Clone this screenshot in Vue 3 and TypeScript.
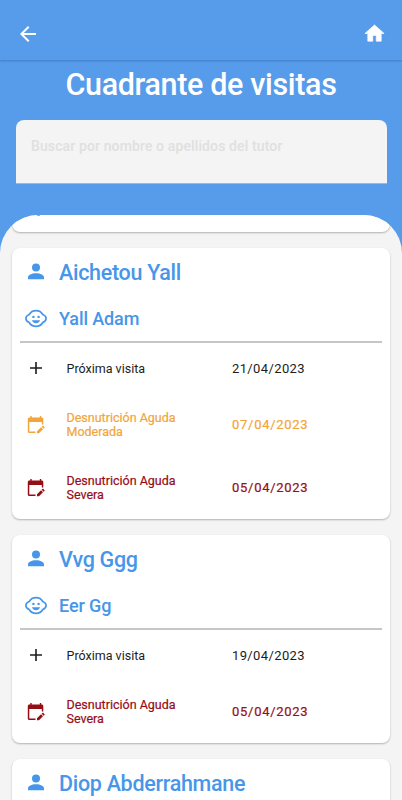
<script setup lang="ts">
type Tone = 'plain' | 'moderate' | 'severe'
interface Visit { label: string; date: string; tone: Tone }
interface Family { tutor: string; child: string; visits: Visit[] }

const families: Family[] = [
  {
    tutor: 'Aichetou Yall',
    child: 'Yall Adam',
    visits: [
      { label: 'Próxima visita', date: '21/04/2023', tone: 'plain' },
      { label: 'Desnutrición Aguda Moderada', date: '07/04/2023', tone: 'moderate' },
      { label: 'Desnutrición Aguda Severa', date: '05/04/2023', tone: 'severe' },
    ],
  },
  {
    tutor: 'Vvg Ggg',
    child: 'Eer Gg',
    visits: [
      { label: 'Próxima visita', date: '19/04/2023', tone: 'plain' },
      { label: 'Desnutrición Aguda Severa', date: '05/04/2023', tone: 'severe' },
    ],
  },
  { tutor: 'Diop Abderrahmane', child: '', visits: [] },
]
</script>

<template>
  <div class="screen">
    <header class="bar">
      <svg class="back" viewBox="0 0 24 24"><path d="M20 11H7.83l5.59-5.59L12 4l-8 8 8 8 1.41-1.41L7.83 13H20z" /></svg>
      <svg class="home" viewBox="0 0 24 24"><path d="M10.200 20v-6h3.600v6H19v-8h3L12 3 2 12h3v8z" stroke="currentColor" stroke-width=".7" stroke-linejoin="round" /></svg>
    </header>
    <h1 class="title"><span>Cuadrante de visitas</span></h1>
    <div class="search"><span>Buscar por nombre o apellidos del tutor</span></div>
    <main class="sheet">
      <section class="card previous"><i class="trace"></i></section>
      <section v-for="family in families" :key="family.tutor" class="card">
        <div class="person tutor">
          <svg class="icon" viewBox="0 0 24 24"><circle cx="12" cy="7.500" r="4" /><path d="M12 13.200c4.420 0 8 1.790 8 4v2H4v-2c0-2.210 3.580-4 8-4z" /></svg>
          <span>{{ family.tutor }}</span>
        </div>
        <div v-if="family.child" class="person child">
          <svg class="icon" viewBox="0 0 24 24">
            <path class="line" d="M12 3.600c3.200 0 5.400 1.500 6.800 3.900 2 .8 3.300 2.200 3.300 4s-1.300 3.200-3.300 4c-1.400 2.400-3.600 3.900-6.800 3.900s-5.400-1.500-6.800-3.900c-2-.8-3.300-2.200-3.300-4s1.300-3.200 3.300-4c1.400-2.400 3.600-3.900 6.800-3.900z" />
            <circle cx="9.400" cy="9.900" r="1.200" /><circle cx="14.600" cy="9.900" r="1.200" />
            <path d="M7.900 13.200h8.200c-.7 1.800-2.200 3-4.100 3s-3.400-1.200-4.100-3z" />
          </svg>
          <span>{{ family.child }}</span>
        </div>
        <div v-if="family.visits.length" class="visits">
          <div v-for="visit in family.visits" :key="visit.label" class="visit" :class="visit.tone">
            <svg v-if="visit.tone === 'plain'" class="icon" viewBox="0 0 24 24"><path d="M11.200 6h1.600v5.200H18v1.600h-5.200V18h-1.600v-5.200H6v-1.600h5.200z" /></svg>
            <svg v-else class="icon" viewBox="0 0 24 24">
              <path d="M6.300 3h1.400v1.500h8.100V3h1.400v1.500h.6c.8 0 1.500.7 1.500 1.500v5.500h-1.500V9H5.300v9.500h6.200V20H5.400a1.600 1.600 0 0 1-1.600-1.600V6c0-.8.700-1.500 1.500-1.500h1z" />
              <path d="M13 18.300v2h2l4-4-2-2zM17.600 13.700l2 2 .8-.8c.3-.3.300-.7 0-1l-1-1c-.3-.3-.7-.3-1 0z" />
            </svg>
            <span class="label">{{ visit.label }}</span>
            <span class="date">{{ visit.date }}</span>
          </div>
        </div>
      </section>
    </main>
  </div>
</template>

<style>
body { margin: 0; overflow: hidden; }
</style>

<style scoped>
.screen { width: 402px; height: 800px; overflow: hidden; display: flex; flex-direction: column; background: #569ceb; font-family: Roboto, "Noto Sans", sans-serif; }
svg { display: block; fill: currentColor; flex: none; }
.bar { box-sizing: border-box; flex: none; height: 60px; padding: 7px 16px 0; display: flex; align-items: center; justify-content: space-between; color: #fff; box-shadow: 0 1px 2px rgba(0, 30, 80, .25); }
.back { width: 24px; height: 24px; }
.home { width: 23px; height: 23px; }
.title { flex: none; margin: 0; height: 60px; line-height: 49px; text-align: center; color: #fff; font-size: 30.500px; font-weight: 500; letter-spacing: -.350px; }
.search { box-sizing: border-box; flex: none; height: 64px; margin: 0 15px 0 16px; padding: 16px 15px; border-radius: 8px 8px 0 0; background: #f4f4f4; border-bottom: 1px solid #b8c74a; color: #e0e0e0; font-size: 14px; line-height: 20px; font-weight: 500; letter-spacing: .120px; }
.sheet { flex: 1; min-height: 0; margin-top: 31px; overflow: hidden; border-radius: 38px 38px 0 0; background: #f4f4f4; display: flex; flex-direction: column; gap: 16px; padding: 0 12px; }
.card { flex: none; background: #fff; border-radius: 8px; box-shadow: 0 1px 2px rgba(0, 0, 0, .28); }
.previous { height: 17px; border-radius: 0 0 8px 8px; }
.trace { display: block; width: 3px; height: 1px; margin-left: 25px; background: #9cbd62; }
.person { display: flex; align-items: center; height: 48px; padding-left: 11.500px; gap: 11.500px; color: #4796e9; font-weight: 500; }
.icon { width: 24px; height: 24px; }
.line { fill: none; stroke: currentColor; stroke-width: 1.700; }
.tutor { font-size: 21.500px; letter-spacing: -.300px; }
.child { font-size: 18px; height: 46px; letter-spacing: -.1px; }
.child span { padding-bottom: 2px; }
.visits { margin: -1px 8px 0; border-top: 2px solid #c6c6c6; }
.visit { display: flex; align-items: center; height: 63px; padding-left: 3.500px; font-size: 12.500px; line-height: 13.500px; color: #1c1c1c; }
.visit.plain { height: 50px; }
.plain .label { padding-top: 1px; }
.visit.moderate { color: #f2a53a; }
.visit.severe { color: #960d16; }
.visit.moderate, .visit.severe { -webkit-text-stroke: .2px currentColor; }
.label { width: 130px; margin-left: 19px; }
.date { margin-left: 35.500px; padding-top: 1px; font-size: 13px; letter-spacing: .380px; }
.moderate .date, .severe .date { letter-spacing: .720px; }
</style>
